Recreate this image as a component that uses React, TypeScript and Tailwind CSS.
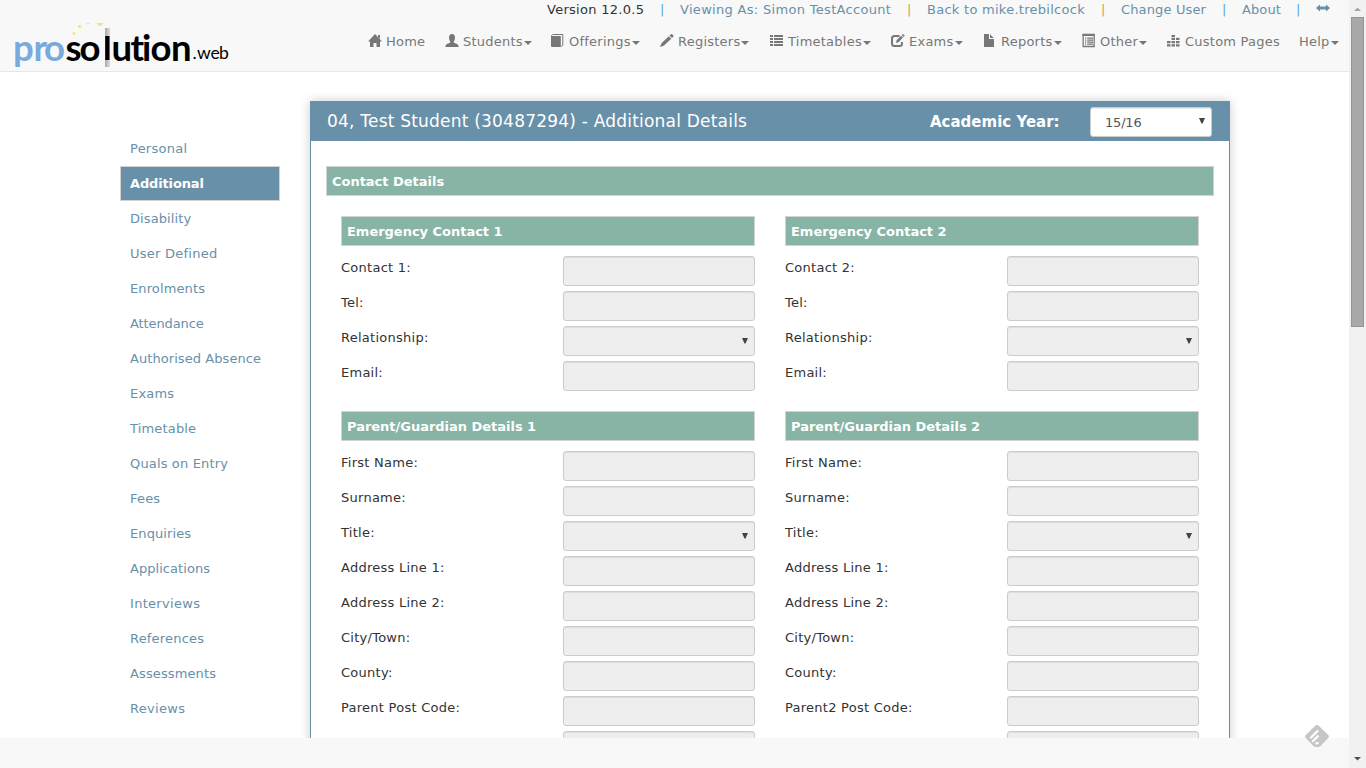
import React from "react";

const G = "#777777";

function Icon({ name }: { name: string }) {
  const shapes: Record<string, React.ReactNode> = {
    home: (
      <>
        <path d="M7 0 14 7.600h-2V13H8.500V9h-3v4H2V7.600H0z" fill={G} />
        <path d="M10 1h2v4l-2-2z" fill={G} />
      </>
    ),
    user: <path d="M4 4c0-2.800 1-4 3-4s3 1.200 3 4c0 1.600-.7 2.600-1.200 3.200v1.200c1.200.9 4.700 1.500 4.700 3.300V13H.5v-1.300c0-1.800 3.500-2.400 4.700-3.300V7.200C4.700 6.600 4 5.600 4 4z" fill={G} />,
    book: (
      <>
        <path d="M0 2h9.800v11H1Q0 13 0 12z" fill={G} />
        <path d="M.3 2 1.800.5h10V11l-1.500 1.700" fill="none" stroke={G} strokeWidth="1" />
      </>
    ),
    pencil: <path d="M0 13 1.500 9.300 8.800 2.200 11.300 4.700 3.700 11.800zM9.500 1.500 11 .2Q11.600-.2 12.200.3l1.200 1.200q.5.6 0 1.100L12 4z" fill={G} />,
    list: <path d="M0 1h3v2H0zm4 0h9v2H4zM0 4h3v2H0zm4 0h9v2H4zM0 7h3v2H0zm4 0h9v2H4zM0 10h3v2H0zm4 0h9v2H4z" fill={G} />,
    edit: (
      <>
        <path d="M8.500 2H3.500Q1 2 1 4.500v5Q1 12 3.500 12h5Q11 12 11 9.500V8" fill="none" stroke={G} strokeWidth="2" />
        <path d="M5 9 5.600 6.300 10.200 1.700 12 3.500 7.500 8.200zM10.800 1.100 12 0l1.800 1.700-1.200 1.200z" fill={G} />
      </>
    ),
    file: <path d="M1 0h5v5h5v8H1zM7 .2 10.800 4H7z" fill={G} />,
    other: (
      <>
        <path d="M1.150.5h11v12h-11z" fill="none" stroke={G} strokeWidth="1.300" />
        <path d="M.5 0h12v2H.5zM3 3.500h1.200v1.200H3zm2.200 0H11v1.200H5.200zM3 5.500h1.200v1.200H3zm2.200 0H11v1.200H5.200zM3 7.500h1.200v1.200H3zm2.200 0H11v1.200H5.200zM3 9.500h1.200v1.200H3zm2.200 0H11v1.200H5.200z" fill={G} />
      </>
    ),
    bars: (
      <path d="M0 7h3.500v2.300H0zm0 3.200h3.500v2.300H0zM4.500 1H8v2H4.500zm0 2.800H8V6H4.500zM4.500 7H8v2.300H4.500zm0 3.200H8v2.300H4.500zM9 3.800h3.500V6H9zM9 7h3.500v2.300H9zm0 3.200h3.500v2.300H9z" fill={G} />
    ),
  };
  return (
    <svg width="14" height="14" viewBox="0 0 14 14" className="-mt-[3px] mr-1 shrink-0 overflow-visible">
      {shapes[name]}
    </svg>
  );
}

function Caret() {
  return <span className="ml-[1px] mt-[1px] h-0 w-0 border-x-4 border-t-4 border-x-transparent border-t-[#777]" />;
}

const nav = [
  { t: "Home", icon: "home", w: "w-[77px]", caret: false },
  { t: "Students", icon: "user", w: "w-[106px]", caret: true },
  { t: "Offerings", icon: "book", w: "w-[109px]", caret: true },
  { t: "Registers", icon: "pencil", w: "w-[110px]", caret: true },
  { t: "Timetables", icon: "list", w: "w-[121px]", caret: true },
  { t: "Exams", icon: "edit", w: "w-[92px]", caret: true },
  { t: "Reports", icon: "file", w: "w-[99px]", caret: true },
  { t: "Other", icon: "other", w: "w-[85px]", caret: true },
  { t: "Custom Pages", icon: "bars", w: "w-[132px]", caret: false },
  { t: "Help", icon: "", w: "w-[50px]", caret: true },
];

const top = [
  { t: "Version 12.0.5", w: "w-[113px]", c: "text-[#333] tracking-[0.28px]" },
  { t: "|", w: "w-[20px]", c: "text-[#5fa3d6]" },
  { t: "Viewing As: Simon TestAccount", w: "w-[227px]", c: "tracking-[0.31px]" },
  { t: "|", w: "w-[20px]", c: "text-[#d79b52]" },
  { t: "Back to mike.trebilcock", w: "w-[174px]", c: "tracking-[0.27px]" },
  { t: "|", w: "w-[20px]", c: "text-[#d79b52]" },
  { t: "Change User", w: "w-[101px]", c: "tracking-[0.14px]" },
  { t: "|", w: "w-[20px]", c: "text-[#5fa3d6]" },
  { t: "About", w: "w-[54px]", c: "tracking-[0.1px]" },
  { t: "|", w: "w-[20px]", c: "text-[#5fa3d6]" },
];

const side = [
  "Personal", "Additional", "Disability", "User Defined", "Enrolments", "Attendance",
  "Authorised Absence", "Exams", "Timetable", "Quals on Entry", "Fees", "Enquiries",
  "Applications", "Interviews", "References", "Assessments", "Reviews",
];

const sideTracking: Record<string, string> = {
  Personal: "tracking-[0.25px]",
  Disability: "tracking-[0.1px]",
  "User Defined": "tracking-[0.25px]",
  Enrolments: "tracking-[0.12px]",
  Attendance: "tracking-[-0.1px]",
  "Authorised Absence": "tracking-[0.07px]",
  Exams: "tracking-[0.2px]",
  Timetable: "tracking-[0.17px]",
  "Quals on Entry": "tracking-[0.15px]",
  Fees: "tracking-[0.2px]",
  Enquiries: "tracking-[0.1px]",
  Applications: "tracking-[0.05px]",
  Interviews: "tracking-[0.3px]",
  References: "tracking-[0.2px]",
  Assessments: "tracking-[0.12px]",
  Reviews: "tracking-[0.3px]",
};

function Logo() {
  return (
    <svg width="240" height="71" viewBox="0 0 240 71" className="shrink-0">
      <g fill="#f8e26a">
        <circle cx="74" cy="33.500" r="1.300" />
        <circle cx="79.500" cy="26.500" r="1.600" />
        <path d="M86 23h4l-2 1.500zM96 23h8l-2 1.300.5 2-2.500-1-2.500 1 .5-2z" />
      </g>
      <path d="M105 28h4.500v39H105z" fill="#b3b3b3" />
      <path d="M107.500 28h2v39h-2z" fill="#d2d2d2" />
      <path d="M105.200 36h4.300v24h-4.300z" fill="#000" />
      <g fontFamily="Lato, sans-serif" fontSize="36.500" fontWeight="700">
        <text x="13 33.500 44" y="60.500" fill="#78aade">pro</text>
        <text x="65.500 79.500" y="60.500">so</text>
        <text x="111.500 130.500 142 150.500 171" y="60.500">ution</text>
      </g>
      <text x="192.500 197 210.500 219" y="59" fontFamily="Lato, sans-serif" fontSize="17.500">.web</text>
    </svg>
  );
}

function Bar({ children }: { children: React.ReactNode }) {
  return (
    <div className="flex h-[30px] items-center border border-[#d3d3d3] bg-[#87b4a5] pt-px pl-[5px] text-[13px] font-bold tracking-[-0.02px] text-white">
      {children}
    </div>
  );
}

function Row({ label }: { label: string }) {
  const isSelect = label === "Title:" || label === "Relationship:";
  return (
    <div className="flex h-[30px] shrink-0 justify-between tracking-[0.26px]">
      <span className="pt-[3px] leading-[18px]">{label}</span>
      <div className="flex w-48 items-center justify-end rounded-[3px] border border-[#ccc] bg-[#eee] pr-[6px] shadow-[inset_0_1px_1px_rgba(0,0,0,0.075)]">
        {isSelect && <Down />}
      </div>
    </div>
  );
}

function Down() {
  return (
    <svg width="6" height="6" viewBox="0 0 6 6" className="-mt-px">
      <path d="M0 0h6L3.500 5.500h-1z" fill="#444" />
    </svg>
  );
}

function Group({ title, rows }: { title: string; rows: string[] }) {
  return (
    <section className="w-[414px]">
      <Bar>{title}</Bar>
      <div className="mt-[10px] flex flex-col gap-[5px]">
        {rows.map((r) => <Row key={r} label={r} />)}
      </div>
    </section>
  );
}

const contact = (n: number) => [`Contact ${n}:`, "Tel:", "Relationship:", "Email:"];
const parent = (n: string) => [
  "First Name:", "Surname:", "Title:", "Address Line 1:", "Address Line 2:", "City/Town:", "County:", `Parent${n} Post Code:`, "",
];

export default function App() {
  return (
    <div className="flex h-[768px] w-[1366px] overflow-hidden bg-white font-['DejaVu_Sans',sans-serif] text-[13px] tracking-[0.5px] whitespace-nowrap text-[#333]">
      <div className="relative flex w-[1349px] flex-col">
        <header className="flex h-[72px] shrink-0 border-b border-[#e7e7e7] bg-[#f8f8f8]">
          <Logo />
          <div className="flex flex-1 flex-col">
            <div className="flex h-[19px] items-center self-start pl-[307px] text-[#6890a9]">
              {top.map((x, i) => (
                <span key={i} className={`shrink-0 ${x.w} ${x.c}`}>{x.t}</span>
              ))}
              <svg width="14" height="8" viewBox="0 0 14 8" className="-mt-[4px]">
                <path d="M0 4 4 .5v2h6v-2L14 4l-4 3.500v-2H4v2z" fill="#6890a9" />
              </svg>
            </div>
            <div className="mt-[13px] flex h-[20px] pl-[128px] tracking-[0.24px] text-[#777]">
              {nav.map((n) => (
                <div key={n.t} className={`flex shrink-0 items-center ${n.w}`}>
                  {n.icon && <Icon name={n.icon} />}
                  <span>{n.t}</span>
                  {n.caret && <Caret />}
                </div>
              ))}
            </div>
          </div>
        </header>
        <main className="flex h-[666px] shrink-0 overflow-hidden pl-[120px]">
          <aside className="mt-[59px] w-[160px]">
            {side.map((s) => (
              <div
                key={s}
                className={
                  s === "Additional"
                    ? "flex h-[35px] items-center border border-[#d3d3d3] bg-[#6890a9] pl-[9px] font-bold tracking-[-0.15px] text-white"
                    : `flex h-[35px] items-center pl-[10px] text-[#6890a9] ${sideTracking[s]}`
                }
              >
                {s}
              </div>
            ))}
          </aside>
          <div className="mt-[29px] ml-[30px] h-[800px] w-[920px] border border-[#6890a9] bg-white shadow-[0_0_10px_rgba(0,0,0,0.2)]">
            <div className="flex h-[39px] items-center bg-[#6890a9] text-[17px] text-white">
              <h1 className="w-[619px] pl-4 text-[17px] tracking-[0.21px]">04, Test Student (30487294) - Additional Details</h1>
              <span className="w-[160px] pt-px text-[15px] font-bold tracking-normal">Academic Year:</span>
              <div className="flex h-[30px] w-[122px] items-center justify-between rounded-[3px] border border-[#ccc] bg-white pr-[6px] pl-[14px] text-[13px] tracking-[-0.2px] text-[#555] shadow-[inset_0_1px_1px_rgba(0,0,0,0.075)]">
                <span className="pt-[2px]">15/16</span>
                <Down />
              </div>
            </div>
            <div className="px-[15px] pt-[25px]">
              <Bar>Contact Details</Bar>
              <div className="mt-5 flex justify-between px-[15px]">
                <Group title="Emergency Contact 1" rows={contact(1)} />
                <Group title="Emergency Contact 2" rows={contact(2)} />
              </div>
              <div className="mt-5 flex justify-between px-[15px]">
                <Group title="Parent/Guardian Details 1" rows={parent("")} />
                <Group title="Parent/Guardian Details 2" rows={parent("2")} />
              </div>
            </div>
          </div>
        </main>
        <footer className="h-[30px] shrink-0 bg-[#f8f8f8]" />
        <svg width="26" height="24" viewBox="0 0 26 24" className="absolute top-[725px] left-[1304px]">
          <path d="M11 1q2-2 4 0l9.200 9q1.500 1.500 0 3L16.500 21q-1 1-2 1h-3q-1 0-2-1L1.800 13q-1.500-1.500 0-3z" fill="#c6c6c6" />
          <path d="m7 12.500 6.500-6.300M9 16l5-4.800M12.300 18.300l1.400-.1" stroke="#fff" strokeWidth="2.300" strokeLinecap="round" />
        </svg>
      </div>
      <div className="flex w-[17px] flex-col items-center bg-[#f1f1f1]">
        <svg width="17" height="17" viewBox="0 0 17 17"><path d="M5 11h7L8.500 7.500z" fill="#a3a3a3" /></svg>
        <div className="h-[310px] w-[13px] border border-[#959595] bg-[#a8a8a8]" />
        <svg width="17" height="17" viewBox="0 0 17 17" className="mt-auto"><path d="M5 6h7L8.500 9.500z" fill="#505050" /></svg>
      </div>
    </div>
  );
}
